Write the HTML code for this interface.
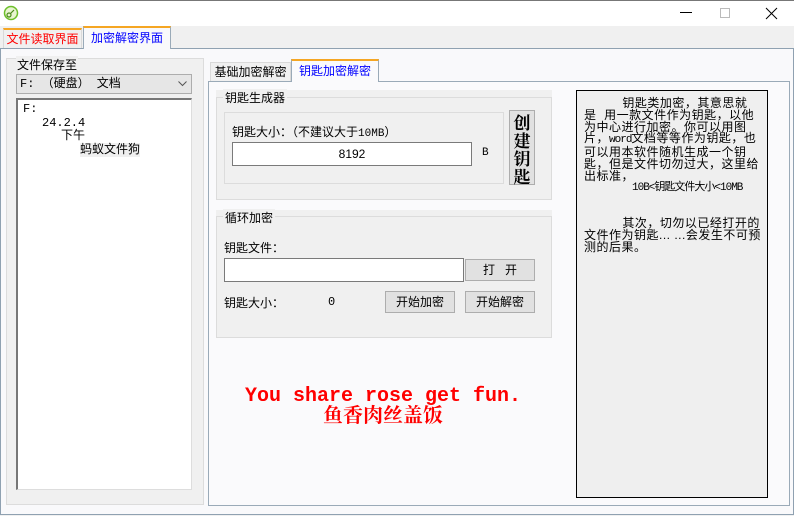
<!DOCTYPE html>
<html><head><meta charset="utf-8"><style>
*{margin:0;padding:0;box-sizing:border-box}
body{width:794px;height:516px;background:#f0f0f0;font-family:"Liberation Sans","Noto Sans CJK SC",sans-serif;font-size:12px;color:#000;position:relative;overflow:hidden}
.a{position:absolute}
.btn{position:absolute;background:#e1e1e1;border:1px solid #adadad;text-align:center;font-size:12px}
.inp{position:absolute;background:#fff;border:1px solid #7a7a7a}
.tab{position:absolute;font-size:12px;text-align:center;border:1px solid #d9d9d9;border-bottom:none;background:#f0f0f0;white-space:nowrap}
.m{font-family:"Liberation Mono","Noto Sans CJK SC",monospace}
</style></head><body>
<div class="a" style="left:0;top:0;width:794px;height:26px;background:#fff;border-top:1px solid #777"></div>
<svg class="a" style="left:3px;top:5px" width="16" height="16"><circle cx="8" cy="8" r="6.5" fill="#e8f5d0" stroke="#6cbf2a" stroke-width="1.5"/><circle cx="6" cy="10" r="2" fill="none" stroke="#4a8a1a" stroke-width="1.2"/><path d="M7.5 8.5L11 5" stroke="#4a8a1a" stroke-width="1.2"/></svg>
<div class="a" style="left:680px;top:12px;width:12px;height:1px;background:#000"></div>
<div class="a" style="left:720px;top:8px;width:10px;height:10px;border:1px solid #bbb"></div>
<svg class="a" style="left:765px;top:7px" width="13" height="13"><path d="M1 1L12 12M12 1L1 12" stroke="#000" stroke-width="1"/></svg>

<div class="tab" style="left:3px;top:28px;width:79px;height:20px;color:#f00;font-size:12px;line-height:18px;border-top:2px solid #f5a623">文件读取界面</div>
<div class="tab" style="left:83px;top:26px;width:88px;height:23px;color:#00f;font-size:12px;line-height:21px;background:#f9f9fb;border-top:2px solid #f5a623;border-color:#9aaab8;border-top-color:#f5a623;z-index:2">加密解密界面</div>
<div class="a" style="left:0;top:48px;width:794px;height:467px;background:#f9f9fb;border:1px solid #8fa1b1"></div>

<div class="a" style="left:6px;top:58px;width:198px;height:447px;background:#f0f0f0;border:1px solid #dcdcdc"></div>
<div class="a" style="left:16px;top:56px;background:#f0f0f0;padding:0 1px;font-size:12px">文件保存至</div>
<div class="a m" style="left:16px;top:74px;width:176px;height:20px;background:#e6e6e6;border:1px solid #adadad;font-size:12px;line-height:18px;padding-left:3px">F: （硬盘） 文档</div>
<svg class="a" style="left:178px;top:81px" width="9" height="6"><path d="M0.5 0.5L4.5 4.5L8.5 0.5" fill="none" stroke="#555"/></svg>
<div class="a m" style="left:16px;top:98px;width:176px;height:392px;background:#fff;border:1px solid #ddd;border-left:2px solid #777;border-top:2px solid #777;font-size:12px;line-height:14px">
<div class="a" style="left:5px;top:2px">F:</div>
<div class="a" style="left:24px;top:16px">24.2.4</div>
<div class="a" style="left:43px;top:29px">下午</div>
<div class="a" style="left:62px;top:43px;background:#f0f0f0">蚂蚁文件狗</div>
</div>

<div class="tab" style="left:210px;top:62px;width:81px;height:20px;line-height:18px">基础加密解密</div>
<div class="tab" style="left:291px;top:59px;width:88px;height:23px;line-height:21px;color:#00f;background:#fafafc;border-top:2px solid #f5a623;border-color:#9aaab8;border-top-color:#f5a623;z-index:2">钥匙加密解密</div>
<div class="a" style="left:208px;top:81px;width:582px;height:425px;background:#fafafc;border:1px solid #9aaab8"></div>

<div class="a" style="left:216px;top:90px;width:336px;height:110px;background:#f0f0f0"></div>
<div class="a" style="left:216px;top:97px;width:336px;height:103px;border:1px solid #dcdcdc"></div>
<div class="a" style="left:223px;top:89px;background:#f0f0f0;padding:0 2px">钥匙生成器</div>
<div class="a" style="left:224px;top:112px;width:280px;height:72px;border:1px solid #dcdcdc"></div>
<div class="a" style="left:232px;top:123px">钥匙大小：（不建议大于<span class="m" style="font-size:11px">10MB</span>）</div>
<div class="inp" style="left:232px;top:142px;width:240px;height:24px;text-align:center;line-height:22px">8192</div>
<div class="a m" style="left:482px;top:147px;font-size:11px">B</div>
<div class="btn" style="left:509px;top:110px;width:26px;height:75px;font-weight:bold;font-size:17px;line-height:18px;padding-top:2px;font-family:'Noto Serif CJK SC',serif">创建钥匙</div>

<div class="a" style="left:216px;top:210px;width:336px;height:128px;background:#f0f0f0"></div>
<div class="a" style="left:216px;top:216px;width:336px;height:122px;border:1px solid #dcdcdc"></div>
<div class="a" style="left:223px;top:209px;background:#f0f0f0;padding:0 2px">循环加密</div>
<div class="a" style="left:224px;top:239px">钥匙文件：</div>
<div class="inp" style="left:224px;top:258px;width:240px;height:24px"></div>
<div class="btn" style="left:465px;top:259px;width:70px;height:22px;line-height:20px">打&nbsp;&nbsp;&nbsp;开</div>
<div class="a" style="left:224px;top:294px">钥匙大小：</div>
<div class="a m" style="left:328px;top:295px">0</div>
<div class="btn" style="left:385px;top:291px;width:70px;height:22px;line-height:20px">开始加密</div>
<div class="btn" style="left:465px;top:291px;width:70px;height:22px;line-height:20px">开始解密</div>

<div class="a" style="left:208px;top:386px;width:350px;text-align:center;color:#f00;font-weight:bold;font-family:'Liberation Mono','Noto Serif CJK SC',monospace;font-size:20px;line-height:21px">You share rose get fun.<br>鱼香肉丝盖饭</div>

<div class="a" style="left:576px;top:90px;width:192px;height:408px;background:#efefef;border:1px solid #000;font-size:12px;line-height:11.8px;padding:7px 6px 0 7px;letter-spacing:0.5px">
<div>&nbsp;&nbsp;&nbsp;&nbsp;&nbsp;&nbsp;&nbsp;&nbsp;&nbsp;&nbsp;钥匙类加密，其意思就是&nbsp;&nbsp;用一款文件作为钥匙，以他为中心进行加密。你可以用图片，<span class="m" style="letter-spacing:-1px;font-size:11px">word</span>文档等等作为钥匙，也可以用本软件随机生成一个钥匙，但是文件切勿过大，这里给出标准，</div>
<div class="m" style="padding-left:48px;font-size:11px;letter-spacing:-1px">10B&lt;钥匙文件大小&lt;10MB</div>
<div style="margin-top:24px">&nbsp;&nbsp;&nbsp;&nbsp;&nbsp;&nbsp;&nbsp;&nbsp;&nbsp;&nbsp;其次，切勿以已经打开的文件作为钥匙... ...会发生不可预测的后果。</div>
</div>
</body></html>
